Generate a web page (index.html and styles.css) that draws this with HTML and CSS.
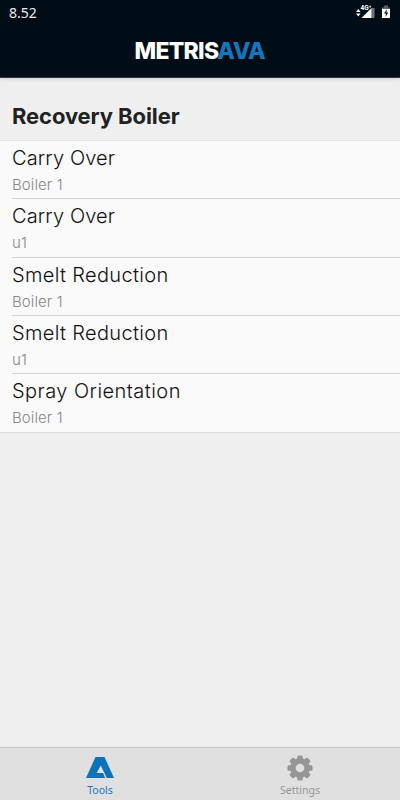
FILE: index.html
```html
<!DOCTYPE html>
<html lang="en">
<head>
  <meta charset="UTF-8" />
  <meta name="viewport" content="width=device-width, initial-scale=1.0" />
  <title>Metris AVA</title>
  <link rel="stylesheet" href="styles.css">
</head>
<body>
  <header class="header">
    <div class="status-bar">
      <span class="clock">8.52</span>
      <svg class="status-icons" width="36" height="18" viewBox="0 0 36 18">
        <path d="M0 9 L2.3 6 L4.6 9 Z M0 10.5 L2.3 13.5 L4.6 10.5 Z" fill="#fff" />
        <path d="M15.5 5 H18.5 V15 H15.5 Z" fill="#6b7479" />
        <path d="M5.5 15 L15.5 5 V15 Z" fill="#fff" />
        <text class="network" x="4.5" y="7">4G⁺</text>
        <path d="M28 2.5 H32 V4.5 H34 V7 H26 V4.5 H28 Z" fill="#59636a" />
        <path d="M26 6 H34 V15 H26 Z" fill="#fff" />
        <path d="M31 6 L28 10.5 H30 L29.5 14 L32.3 9.5 H30.4 Z" fill="#000d16" />
      </svg>
    </div>
    <h1 class="logo"><span>METRIS</span><span class="logo-ava">AVA</span></h1>
  </header>

  <main class="content">
    <h2>Recovery Boiler</h2>
    <ul class="tool-list">
      <li><div class="tool"><span class="tool-name">Carry Over</span><span class="tool-unit">Boiler 1</span></div></li>
      <li><div class="tool"><span class="tool-name">Carry Over</span><span class="tool-unit">u1</span></div></li>
      <li><div class="tool"><span class="tool-name smelt">Smelt Reduction</span><span class="tool-unit">Boiler 1</span></div></li>
      <li><div class="tool"><span class="tool-name smelt">Smelt Reduction</span><span class="tool-unit">u1</span></div></li>
      <li><div class="tool"><span class="tool-name spray">Spray Orientation</span><span class="tool-unit">Boiler 1</span></div></li>
    </ul>
  </main>

  <nav class="tabs">
    <a class="tab active">
      <svg width="30" height="24" viewBox="0 0 30 24">
        <path d="M10.5 2 H19.5 L29 23 H1 Z" fill="#0c72ba" />
        <path d="M11.7 18 L15.8 10.5 L21.8 23 H20.2 L18 18 Z" fill="#e0e0e0" />
      </svg>
      <span>Tools</span>
    </a>
    <a class="tab">
      <svg width="26" height="26" viewBox="-13 -13 26 26" fill="#969696">
        <g id="teeth">
          <rect x="-2.8" y="-12.6" width="5.6" height="25.2" rx="1.6" />
          <rect x="-12.6" y="-2.8" width="25.2" height="5.6" rx="1.6" />
        </g>
        <use href="#teeth" transform="rotate(45)" />
        <circle r="9.9" />
        <circle r="4.3" fill="#e0e0e0" />
      </svg>
      <span>Settings</span>
    </a>
  </nav>
</body>
</html>
```
FILE: styles.css
```css
* {
  box-sizing: border-box;
  margin: 0;
  padding: 0;
}
body {
  font-family: Inter, Arial, sans-serif;
  background: #efefef;
  height: 100vh;
  display: flex;
  flex-direction: column;
  overflow: hidden;
}
.header {
  height: 78px;
  background: #000d16;
  border-bottom: 1px solid #34353a;
  box-shadow: 0 1px 4px rgba(0, 0, 0, 0.15);
}
.status-bar {
  height: 24px;
  padding: 0 8px 0 9px;
  display: flex;
  align-items: center;
  justify-content: space-between;
}
.clock {
  font-family: "Noto Sans", sans-serif;
  font-size: 14px;
  color: #e8eaeb;
}
.network {
  font-family: Roboto, sans-serif;
  font-size: 6.5px;
  font-weight: bold;
  fill: #fff;
}
.logo {
  display: flex;
  justify-content: center;
  font-size: 23px;
  font-weight: 800;
  line-height: 54px;
  letter-spacing: -0.75px;
  color: #fff;
}
.logo-ava {
  margin-left: -1px;
  letter-spacing: -0.4px;
  color: #1277bd;
}
.content {
  flex: 1;
}
h2 {
  height: 62px;
  padding: 20px 12px 0;
  font-size: 22px;
  font-weight: 700;
  line-height: 36px;
  letter-spacing: -0.1px;
  color: #222;
}
.tool-list {
  list-style: none;
  background: #fafafa;
  border-top: 1px solid #e2e2e2;
  border-bottom: 1px solid #d9d9d9;
}
.tool-list li {
  padding-left: 12px;
}
.tool {
  height: 58.3px;
  display: flex;
  flex-direction: column;
  border-bottom: 1px solid #d3d3d3;
}
.tool-list li:last-child .tool {
  border-bottom: none;
}
.tool-name {
  padding-top: 3px;
  font-size: 20px;
  font-weight: 300;
  line-height: 29px;
  letter-spacing: 0.12px;
  color: #111;
}
.smelt {
  letter-spacing: 0.33px;
}
.spray {
  letter-spacing: 0.45px;
}
.tool-unit {
  font-size: 15px;
  font-weight: 300;
  line-height: 24px;
  letter-spacing: 0.1px;
  color: #888;
}
.tabs {
  height: 53px;
  display: flex;
  background: #e0e0e0;
  border-top: 1px solid #c3c3c3;
}
.tab {
  flex: 1;
  display: flex;
  flex-direction: column;
  align-items: center;
  justify-content: space-between;
  padding: 7px 0 2px;
  font-family: "Noto Sans", sans-serif;
  font-size: 10.5px;
  line-height: 16px;
  color: #969696;
}
.tab.active {
  color: #1277bd;
}
```
